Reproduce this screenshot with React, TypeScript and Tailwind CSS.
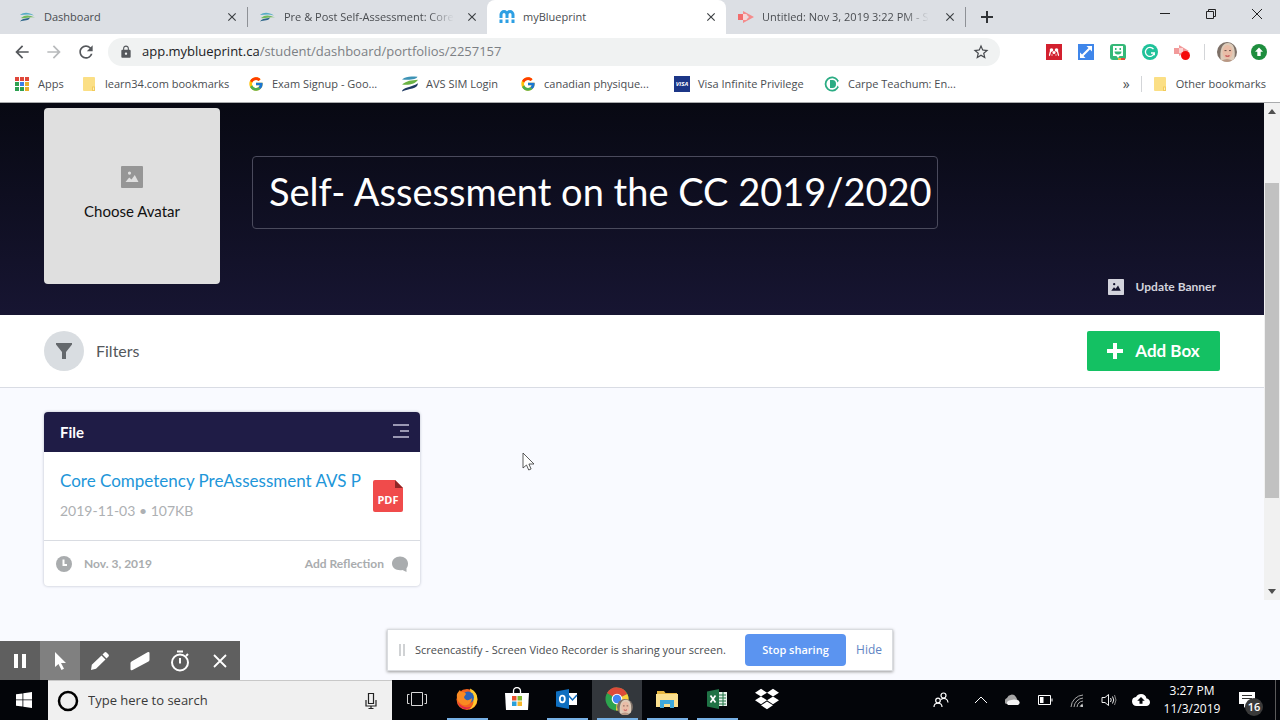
import React, { useState } from "react";
import { FcGoogle } from "react-icons/fc";
import { FaDropbox } from "react-icons/fa";
import {
  MdArrowBack,
  MdArrowForward,
  MdClose,
  MdCloudUpload,
  MdLock,
  MdOutlineStarBorder,
  MdRefresh,
} from "react-icons/md";

interface Tab {
  id: string;
  title: string;
  icon: React.ReactNode;
  className: string;
}

interface Bookmark {
  title: string;
  icon: React.ReactNode;
  className: string;
}

const WaveIcon = ({ className }: { className: string }) => (
  <svg viewBox="0 0 16 16" className={className}>
    <path d="M0 3.500C4 0 9 .2 15.500 .8 15 3 8 4.500 0 3.500Z" fill="#3d93b5" />
    <path d="M0 8.500C5 4.600 9 4.400 16 3.800 14 7.400 7 9.800 0 8.500Z" fill="#6bb344" />
    <path d="M0 15.500C0 11.600 9 11.600 16 7.200 15.500 13.600 7 12 0 15.500Z" fill="#1f3a63" />
  </svg>
);

const WaveTabIcon = () => (
  <svg viewBox="0 0 16 16" className="size-4">
    <path d="M0 6C4 2.800 9 3.400 14 6.400 9 5 5 5.800 0 6Z" fill="#56acc4" />
    <path d="M1 9C5 5.600 9 5.800 15 8.600 9 7.400 6 9.800 1 9Z" fill="#72bb5c" />
    <path d="M0 12.400C3 9.200 6 10 10 8.600 9 12 4 11.400 0 12.400Z" fill="#2b6488" />
  </svg>
);

const MyBlueprintIcon = () => (
  <svg viewBox="0 0 16 16" className="size-4">
    <path
      d="M2 9V5.600a3 3 0 0 1 6 0V9M8 5.600a3 3 0 0 1 6 0V9"
      fill="none"
      stroke="#2d9fe3"
      strokeWidth="3"
    />
    <path d="M.5 10.500h3V14h-3zM6.500 10.500h3V14h-3zM12.500 10.500h3V14h-3z" fill="#2d9fe3" />
  </svg>
);

const CastifyIcon = () => (
  <svg viewBox="0 0 16 16" className="size-4">
    <path d="M0 5h5v6H0z" fill="#f26d6d" />
    <path d="M5 2l11 6-11 6v-3h3l3-3-3-3H5z" fill="#f58c8c" />
    <path d="M5 5h3.500v6H5z" fill="#fbd4d4" />
  </svg>
);

const AppsIcon = () => (
  <svg viewBox="0 0 16 16" className="size-4">
    <path d="M1 1h4v4H1zM6 1h4v4H6zM11 1h4v4h-4z" fill="#e0473a" />
    <path d="M1 6h4v4H1z" fill="#2fa152" />
    <path d="M6 6h4v4H6z" fill="#3d7fe8" />
    <path d="M11 6h4v4h-4z" fill="#eab02e" />
    <path d="M1 11h4v4H1zM6 11h4v4H6z" fill="#2fa152" />
    <path d="M11 11h4v4h-4z" fill="#eab02e" />
    <path d="M5.500 1v14M10.500 1v14M1 5.500h14M1 10.500h14" stroke="#fff" />
  </svg>
);

const FolderIcon = () => (
  <svg viewBox="0 0 16 16" className="size-4">
    <path d="M2 1.500A1 1 0 0 1 3 1h10a1 1 0 0 1 1 1v13H3a1 1 0 0 1-1-1z" fill="#fbdf85" />
    <path d="M11 10.500h3V15h-3z" fill="#f2cb5c" />
    <path d="M12 11.500h1V14h-1z" fill="#fdeeb8" />
  </svg>
);

const VisaIcon = () => (
  <span className="flex size-4 items-center justify-center bg-[#1c3687] text-[6px] font-bold italic text-white">
    VISA
  </span>
);

const CarpeIcon = () => (
  <svg viewBox="0 0 16 16" className="size-4">
    <path
      d="M13.400 4a6.600 6.600 0 1 0 0 8"
      fill="none"
      stroke="#2bac83"
      strokeWidth="1.800"
    />
    <path d="M6 4h2.500a3.500 4 0 0 1 0 8H6z" fill="#2bac83" />
    <path d="M12.500 3.500l2.500 1-1.500 2zM12.500 12.500l2.500-1-1.500-2z" fill="#2bac83" />
  </svg>
);

const PictureIcon = ({ className }: { className: string }) => (
  <svg viewBox="0 0 22 22" className={className} fill="currentColor">
    <path
      fillRule="evenodd"
      d="M1 0h20a1 1 0 0 1 1 1v20a1 1 0 0 1-1 1H1a1 1 0 0 1-1-1V1a1 1 0 0 1 1-1zM4.500 16h13L13.800 9l-3.300 4.400-2.300-2zM8.500 5.500a1.600 1.600 0 1 0 0 3.200 1.600 1.600 0 0 0 0-3.200z"
    />
  </svg>
);

const Face = ({ className }: { className: string }) => (
  <svg viewBox="0 0 20 20" className={className}>
    <defs>
      <clipPath id="face">
        <circle cx="10" cy="10" r="10" />
      </clipPath>
    </defs>
    <g clipPath="url(#face)">
      <path d="M0 0h20v20H0z" fill="#7d7067" />
      <path d="M4 20C2 8 5 1 11 1s8 6 6 19z" fill="#dccbb9" />
      <ellipse cx="10.500" cy="10" rx="5" ry="7" fill="#e9bda7" />
      <path d="M7.500 8.600h2M12 8.600h2" stroke="#6a5048" />
      <path d="M8.500 13.500q2 1.500 4 0" stroke="#c04b50" fill="none" strokeWidth="1.200" />
      <path d="M3 20q7-6 14 0z" fill="#b99784" />
    </g>
  </svg>
);

const tabs: Tab[] = [
  { id: "dashboard", title: "Dashboard", icon: <WaveTabIcon />, className: "" },
  {
    id: "assessment",
    title: "Pre & Post Self-Assessment: Core",
    icon: <WaveTabIcon />,
    className: "mask-r-from-85%",
  },
  { id: "myblueprint", title: "myBlueprint", icon: <MyBlueprintIcon />, className: "" },
  {
    id: "untitled",
    title: "Untitled: Nov 3, 2019 3:22 PM - S",
    icon: <CastifyIcon />,
    className: "mask-r-from-85%",
  },
];

const bookmarks: Bookmark[] = [
  { title: "Apps", icon: <AppsIcon />, className: "w-[67px]" },
  { title: "learn34.com bookmarks", icon: <FolderIcon />, className: "w-[167px]" },
  { title: "Exam Signup - Goo...", icon: <FcGoogle size={16} />, className: "w-[154px]" },
  { title: "AVS SIM Login", icon: <WaveIcon className="size-4" />, className: "w-[118px]" },
  { title: "canadian physique...", icon: <FcGoogle size={16} />, className: "w-[154px]" },
  { title: "Visa Infinite Privilege", icon: <VisaIcon />, className: "w-[150px]" },
  { title: "Carpe Teachum: En...", icon: <CarpeIcon />, className: "w-[150px]" },
];

const extensions = [
  {
    name: "Mendeley",
    icon: (
      <svg viewBox="0 0 16 16" className="size-4">
        <path d="M0 0h16v16H0z" fill="#d3202e" />
        <circle cx="5.500" cy="6" r="1.800" fill="#fff" />
        <circle cx="10.500" cy="6" r="1.800" fill="#fff" />
        <circle cx="8" cy="8.500" r="1.500" fill="#fff" />
        <path
          d="M3 11.500c1.300-.3.500-3 2-5M13 11.500c-1.300-.3-.5-3-2-5M6 10.500v1M10 10.500v1"
          fill="none"
          stroke="#fff"
          strokeWidth="1.300"
        />
      </svg>
    ),
  },
  {
    name: "Resize",
    icon: (
      <svg viewBox="0 0 16 16" className="size-4">
        <path d="M0 0h16v16H0z" fill="#3f86ea" />
        <path d="M8.500 2H14v5.500l-2-2L5.500 12l2 2H2V8.500l2 2L10.500 4z" fill="#fff" />
      </svg>
    ),
  },
  {
    name: "Bitmoji",
    icon: (
      <svg viewBox="0 0 16 16" className="size-4">
        <rect width="16" height="16" rx="3" fill="#35b878" />
        <path d="M3 2h10v10H9.500L8 14l-1.500-2H3z" fill="#fff" />
        <path d="M5 4h1.500v2H5zM9.500 4H11v2H9.500zM4.500 7.500h7a3.500 3 0 0 1-7 0z" fill="#35b878" />
        <path d="M8 14h3v2H8z" fill="#f3b13a" />
        <path d="M11 14h4v2h-4z" fill="#e2483d" />
      </svg>
    ),
  },
  {
    name: "Grammarly",
    icon: (
      <svg viewBox="0 0 16 16" className="size-4">
        <circle cx="8" cy="8" r="8" fill="#1fc29a" />
        <path
          d="M11.500 5.200A4.500 4.500 0 1 0 12.300 9H9M12.300 8.300v3"
          fill="none"
          stroke="#fff"
          strokeWidth="1.300"
        />
      </svg>
    ),
  },
  {
    name: "Screencastify",
    icon: (
      <svg viewBox="0 0 16 16" className="size-4">
        <path d="M0 4h5v6H0zM5 1l10 6-10 5z" fill="#f29a9a" />
        <path d="M5 4h4v5H5z" fill="#fbd4d4" />
        <circle cx="11.500" cy="11.500" r="4.500" fill="#f40b0b" />
      </svg>
    ),
  },
];

const FirefoxIcon = () => (
  <svg viewBox="0 0 24 24" className="size-6">
    <circle cx="12" cy="12.500" r="10.500" fill="#f4631e" />
    <path d="M15 1.500c5 2 8.500 7 7 13-1 4-4 7-8 8 5-4 6-9 2-14z" fill="#ffcb2f" />
    <circle cx="13" cy="10.500" r="6" fill="#2c63b8" />
    <path d="M2 7c1-2 2-3 3-4l1 2c2 0 4 0 5 2l-2 3c1 4 5 4 8 1 0 6-5 8-9 7-4-2-7-6-6-11z" fill="#f98a22" />
    <path d="M3 15c3 5 9 7 14 4-4 5-12 4-14-4z" fill="#e2264f" />
  </svg>
);

const StoreIcon = () => (
  <svg viewBox="0 0 24 24" className="size-6">
    <path d="M8.500 7V4a3.500 3.500 0 0 1 7 0v3" fill="none" stroke="#fff" strokeWidth="1.300" />
    <path d="M0 6h24l-1 17H1z" fill="#fff" />
    <path d="M7 9h4.500v4.500H7z" fill="#e8502c" />
    <path d="M12.500 9H17v4.500h-4.500z" fill="#7fb82c" />
    <path d="M7 14.500h4.500V19H7z" fill="#2ba0da" />
    <path d="M12.500 14.500H17V19h-4.500z" fill="#f6b62a" />
  </svg>
);

const OutlookIcon = () => (
  <svg viewBox="0 0 24 24" className="size-6">
    <path d="M13 6h9v12h-9z" fill="#fff" />
    <path d="M13 8l4.500 5L22 8" fill="none" stroke="#0f6cbd" strokeWidth="1.500" />
    <path d="M1 4.500L14 2v20L1 19.500z" fill="#0f6fc0" />
    <ellipse cx="7.300" cy="12" rx="2.500" ry="3.300" fill="none" stroke="#fff" strokeWidth="1.800" />
  </svg>
);

const ChromeIcon = () => (
  <span className="relative">
    <svg viewBox="0 0 24 24" className="size-6">
      <circle cx="12" cy="12" r="11.500" fill="#2da44e" />
      <path d="M12 12L2 6a11.500 11.500 0 0 1 20.300 1z" fill="#dd4b39" />
      <path d="M12 12l10.300-5A11.500 11.500 0 0 1 11 23.500z" fill="#fdd03b" />
      <circle cx="12" cy="12" r="5.300" fill="#fff" />
      <circle cx="12" cy="12" r="4.200" fill="#4285f4" />
    </svg>
    <Face className="absolute -right-1 -bottom-1 size-4" />
  </span>
);

const ExplorerIcon = () => (
  <svg viewBox="0 0 24 24" className="size-6">
    <path d="M2 4h7l1.500 2H22v4H2z" fill="#e8b842" />
    <path d="M1 7h22v13H1z" fill="#fbe08f" />
    <path d="M5 21v-8h14v8h-4v-4H9v4z" fill="#3ea9dc" />
  </svg>
);

const ExcelIcon = () => (
  <svg viewBox="0 0 24 24" className="size-6">
    <path d="M13 5h9v14h-9z" fill="#e9f3ec" />
    <path d="M14 8h7M14 11h7M14 14h7M14 17h7M18 5v14" stroke="#1f7245" />
    <path d="M2 4.500L14 2v20L2 19.500z" fill="#1f7245" />
    <path d="M5.500 8.500l5 7M10.500 8.500l-5 7" stroke="#fff" strokeWidth="1.700" />
  </svg>
);

const TaskViewIcon = () => (
  <svg viewBox="0 0 20 16" className="h-4 w-5" fill="none" stroke="#d8d8d8">
    <path d="M4.500 1.500h11v13h-11zM2.500 3.500h-2v9h2M17.500 3.500h2v9h-2" />
  </svg>
);

const taskbarApps = [
  { name: "Task View", icon: <TaskViewIcon />, open: false },
  { name: "Firefox", icon: <FirefoxIcon />, open: true },
  { name: "Microsoft Store", icon: <StoreIcon />, open: false },
  { name: "Outlook", icon: <OutlookIcon />, open: true },
  { name: "Chrome", icon: <ChromeIcon />, open: true },
  { name: "File Explorer", icon: <ExplorerIcon />, open: true },
  { name: "Excel", icon: <ExcelIcon />, open: true },
  { name: "Dropbox", icon: <FaDropbox size={24} color="#fff" />, open: false },
];

const trayIcons = [
  {
    name: "People",
    className: "w-10 pr-2",
    icon: (
      <svg viewBox="0 0 16 16" className="size-4" fill="none" stroke="#fff" strokeWidth="1.200">
        <circle cx="10.500" cy="3.500" r="2.500" />
        <circle cx="5" cy="8.500" r="2.300" />
        <path d="M1 15c0-5 8-5 8 0M8 7.500c3-2.500 7-.5 7 3" />
      </svg>
    ),
  },
  {
    name: "Show hidden icons",
    className: "w-8",
    icon: (
      <svg viewBox="0 0 16 16" className="size-4" fill="none" stroke="#fff">
        <path d="M2 11l6-6 6 6" />
      </svg>
    ),
  },
  {
    name: "OneDrive",
    className: "w-8",
    icon: (
      <svg viewBox="0 0 16 16" className="size-4">
        <path d="M1 12a3.500 3.500 0 0 1 1-6 5 5 0 0 1 9-1l2 4z" fill="#a5a5a5" />
        <path d="M3 13a2.500 2.500 0 0 1 1-4.500l5-1 3 .5a2.600 2.600 0 0 1 1 5z" fill="#f5f5f5" />
      </svg>
    ),
  },
  {
    name: "Battery",
    className: "w-8",
    icon: (
      <svg viewBox="0 0 16 16" className="size-4">
        <path d="M1.500 3.500h12v9h-12zM15 6.500v3" fill="none" stroke="#fff" />
        <path d="M3 5h3.500v6H3z" fill="#fff" />
      </svg>
    ),
  },
  {
    name: "Network",
    className: "w-8",
    icon: (
      <svg viewBox="0 0 16 16" className="size-4" fill="none" stroke="#aaa">
        <path d="M2 15A13 13 0 0 1 14 3M5 15A10 10 0 0 1 14 6M8 15a7 7 0 0 1 6-6M11 15a4 4 0 0 1 3-3" />
        <circle cx="13" cy="14" r="1" fill="#fff" stroke="none" />
      </svg>
    ),
  },
  {
    name: "Volume",
    className: "w-8",
    icon: (
      <svg viewBox="0 0 16 16" className="size-4" fill="none" stroke="#eee">
        <path d="M1 5.500h3l3.500-3v11l-3.500-3H1z" />
        <path d="M9.500 6q1.500 2 0 4M11.500 4.500q2.500 3.500 0 7" />
        <path d="M13.500 3q3 5 0 10" stroke="#888" />
      </svg>
    ),
  },
  {
    name: "Backup",
    className: "w-8",
    icon: <MdCloudUpload size={18} color="#fff" />,
  },
];

const recorderTools = [
  {
    name: "Pause",
    icon: (
      <svg viewBox="0 0 16 16" className="size-4" fill="#fff">
        <path d="M2 1h4v14H2zM10 1h4v14h-4z" />
      </svg>
    ),
  },
  {
    name: "Mouse",
    icon: (
      <svg viewBox="0 0 20 20" className="size-5" fill="#fff">
        <path d="M5 1v15l3.500-3 3 6 2.500-1.200-3-5.800h5z" />
      </svg>
    ),
  },
  {
    name: "Pen",
    icon: (
      <svg viewBox="0 0 20 20" className="size-5" fill="#fff">
        <path d="M1 19l.8-5.200L11.500 4.500l4 4L6 17.800zM12.500 3.500l2-2q1-.9 2 0l2 2q.9 1 0 2l-2 2z" />
      </svg>
    ),
  },
  {
    name: "Eraser",
    icon: (
      <svg viewBox="0 0 20 20" className="size-5" fill="#fff">
        <path d="M1.500 10.500L17.500 1.300q2-1 2 1v6.500q0 1-1 1.600L2.500 19Q.5 20 .5 18v-6q0-1 1-1.500z" />
      </svg>
    ),
  },
  {
    name: "Timer",
    icon: (
      <svg viewBox="0 0 20 22" className="h-[22px] w-5" fill="none" stroke="#fff" strokeWidth="2">
        <circle cx="10" cy="12.500" r="8" />
        <path d="M7 1.500h6M10 8v5.500M16 6l2-2" />
      </svg>
    ),
  },
  {
    name: "Close",
    icon: (
      <svg viewBox="0 0 16 16" className="size-4" fill="none" stroke="#fff" strokeWidth="1.800">
        <path d="M2 2l12 12M14 2L2 14" />
      </svg>
    ),
  },
];

function TabStrip() {
  const [activeTab, setActiveTab] = useState("myblueprint");

  return (
    <div className="flex h-[34px] bg-[#dcdfe4] pl-2">
      {tabs.map((tab) => (
        <React.Fragment key={tab.id}>
          <div
            className={`flex w-[239px] items-center pr-2 pl-3 ${
              tab.id === activeTab ? "rounded-t-lg bg-white" : ""
            }`}
          >
            <button
              onClick={() => setActiveTab(tab.id)}
              className="flex min-w-0 flex-1 items-center gap-2"
            >
              <span className="shrink-0">{tab.icon}</span>
              <span className={`whitespace-nowrap ${tab.className}`}>{tab.title}</span>
            </button>
            <button aria-label={`Close ${tab.title}`} className="shrink-0">
              <MdClose size={14} color="#3c4043" />
            </button>
          </div>
          {(tab.id === "dashboard" || tab.id === "untitled") && (
            <span className="h-5 w-px self-center bg-[#8e9196]" />
          )}
        </React.Fragment>
      ))}
      <button aria-label="New tab" className="ml-[13px]">
        <svg viewBox="0 0 16 16" className="size-4" stroke="#303336" strokeWidth="2">
          <path d="M8 2v12M2 8h12" />
        </svg>
      </button>
      <div className="ml-auto flex h-7 items-center">
        <button aria-label="Minimize" className="flex w-[46px] justify-center">
          <svg viewBox="0 0 12 12" className="size-3" stroke="#222">
            <path d="M1 5.500h10" />
          </svg>
        </button>
        <button aria-label="Restore" className="flex w-[46px] justify-center">
          <svg viewBox="0 0 12 12" className="size-3" fill="none" stroke="#222">
            <path d="M1.500 3.500h7v7h-7zM3.500 3.500v-2h7v7h-2" />
          </svg>
        </button>
        <button aria-label="Close window" className="flex w-[46px] justify-center">
          <svg viewBox="0 0 12 12" className="size-3" stroke="#222">
            <path d="M1 1l10 10M11 1L1 11" />
          </svg>
        </button>
      </div>
    </div>
  );
}

function Toolbar() {
  const [path, setPath] = useState("/student/dashboard/portfolios/2257157");

  return (
    <div className="flex h-9 items-center pr-[13px] pl-3">
      <div className="flex gap-3 pr-3 text-[#55585c]">
        <button aria-label="Back">
          <MdArrowBack size={20} />
        </button>
        <button aria-label="Forward" className="text-[#b8babc]">
          <MdArrowForward size={20} />
        </button>
        <button aria-label="Reload">
          <MdRefresh size={20} />
        </button>
      </div>
      <div className="flex h-7 flex-1 items-center rounded-full bg-[#f0f2f2] pr-[10px] pl-[11px] text-[13px]">
        <MdLock size={14} color="#55585c" />
        <label htmlFor="address" className="ml-[9px] text-[#202124]">
          app.myblueprint.ca
        </label>
        <input
          id="address"
          value={path}
          onChange={(e) => setPath(e.target.value)}
          className="min-w-0 flex-1 bg-transparent text-[#7c8084] outline-none"
        />
        <button aria-label="Bookmark this page">
          <MdOutlineStarBorder size={18} color="#45484c" />
        </button>
      </div>
      <div className="ml-[46px] flex items-center gap-4">
        {extensions.map((item) => (
          <button key={item.name} aria-label={item.name}>
            {item.icon}
          </button>
        ))}
      </div>
      <span className="ml-[14px] h-4 w-px bg-[#d3d5d8]" />
      <button aria-label="Profile" className="ml-3">
        <Face className="size-5" />
      </button>
      <button aria-label="Update" className="ml-[14px]">
        <svg viewBox="0 0 16 16" className="size-4">
          <circle cx="8" cy="8" r="8" fill="#1e8e3e" />
          <path d="M8 3.500l4 4.300H9.700V12H6.300V7.800H4z" fill="#fff" />
        </svg>
      </button>
    </div>
  );
}

function BookmarksBar() {
  return (
    <div className="flex h-[33px] items-center border-b border-[#a9abad] pr-[14px] pb-1 pl-[14px] whitespace-nowrap">
      {bookmarks.map((item) => (
        <a key={item.title} href="#" className={`flex items-center gap-2 ${item.className}`}>
          <span className="shrink-0">{item.icon}</span>
          {item.title}
        </a>
      ))}
      <button className="ml-auto text-sm">»</button>
      <span className="mr-[10px] ml-[11px] h-4 w-px bg-[#d3d5d8]" />
      <a href="#" className="flex items-center gap-2">
        <FolderIcon />
        Other bookmarks
      </a>
    </div>
  );
}

function Banner() {
  const [title, setTitle] = useState("Self- Assessment on the CC 2019/2020");

  return (
    <header className="flex h-[212px] items-start bg-linear-to-b from-[#080913] to-[#171532] px-11 pt-[5px]">
      <button className="flex size-44 shrink-0 flex-col items-center justify-center gap-3 rounded bg-[#dfdfdf] pb-1 text-[15px] text-[#111]">
        <PictureIcon className="size-[22px] text-[#969696]" />
        Choose Avatar
      </button>
      <input
        aria-label="Portfolio title"
        value={title}
        onChange={(e) => setTitle(e.target.value)}
        className="mt-12 ml-8 h-[73px] w-[686px] min-w-0 rounded border border-[#4a4a5c] bg-transparent pr-1 pb-1 pl-4 text-[38px] text-white outline-none"
      />
      <button className="mr-1 mb-5 ml-auto flex items-center gap-3 self-end text-xs font-bold whitespace-nowrap text-[#d3d3dc]">
        <PictureIcon className="size-4" />
        Update Banner
      </button>
    </header>
  );
}

function FileCard() {
  return (
    <article className="w-[376px] overflow-hidden rounded bg-white shadow-[0_0_3px_#b8bcc8]">
      <div className="flex h-10 items-center justify-between bg-[#1f1c46] pr-[10px] pl-4">
        <h2 className="text-[15px] font-bold text-white">File</h2>
        <button aria-label="Box menu">
          <svg viewBox="0 0 18 16" className="h-4 w-[18px]" stroke="#9a98b3" strokeWidth="2">
            <path d="M1 1h16M8 7h9M1 13h16" />
          </svg>
        </button>
      </div>
      <div className="flex h-[89px] items-center justify-between border-b border-[#d9dce2] pr-[17px] pl-4">
        <div className="leading-6 whitespace-nowrap">
          <a href="#" className="text-[17px] text-[#2196d9]">
            Core Competency PreAssessment AVS P
          </a>
          <p className="mt-1 text-sm leading-6 text-[#adb0b3]">2019-11-03 • 107KB</p>
        </div>
        <svg viewBox="0 0 30 32" className="h-8 w-[30px] shrink-0">
          <path d="M2 0h20l8 8v22a2 2 0 0 1-2 2H2a2 2 0 0 1-2-2V2a2 2 0 0 1 2-2z" fill="#f04b4b" />
          <path d="M22 0l8 8h-8z" fill="#8e2626" />
          <text
            x="15"
            y="24"
            textAnchor="middle"
            className="fill-white font-['Open_Sans',sans-serif] text-[11px] font-bold"
          >
            PDF
          </text>
        </svg>
      </div>
      <div className="flex h-[45px] items-center pr-3 pl-3 text-xs font-bold text-[#a9acae]">
        <svg viewBox="0 0 16 16" className="mr-3 size-4">
          <circle cx="8" cy="8" r="8" fill="#a9acae" />
          <path d="M7.500 3.500V9H11" fill="none" stroke="#fff" strokeWidth="2" />
        </svg>
        Nov. 3, 2019
        <button className="ml-auto flex items-center gap-2">
          Add Reflection
          <svg viewBox="0 0 16 16" className="size-4" fill="#a9acae">
            <path d="M8 .5c4.500 0 8 3 8 7 0 2-.5 3.500-1.500 4.700V16l-4-2C5 15 0 12.500 0 7.500c0-4 3.500-7 8-7z" />
          </svg>
        </button>
      </div>
    </article>
  );
}

function Scrollbar() {
  return (
    <div className="mb-20 flex w-4 shrink-0 flex-col items-center justify-between bg-[#f1f1f1] py-[6px]">
      <svg viewBox="0 0 8 5" className="h-[5px] w-2">
        <path d="M4 0l4 5H0z" fill="#505050" />
      </svg>
      <div className="mt-[69px] mb-[91px] w-[14px] flex-1 bg-[#c1c1c1]" />
      <svg viewBox="0 0 8 5" className="h-[5px] w-2">
        <path d="M4 5l4-5H0z" fill="#505050" />
      </svg>
    </div>
  );
}

function Recorder() {
  return (
    <div className="absolute bottom-0 left-0 flex h-[39px] bg-[#5f5f5f]">
      {recorderTools.map((tool) => (
        <button
          key={tool.name}
          aria-label={tool.name}
          className={`flex w-10 items-center justify-center ${
            tool.name === "Mouse" ? "bg-[#808080]" : ""
          }`}
        >
          {tool.icon}
        </button>
      ))}
    </div>
  );
}

function SharingBar() {
  return (
    <div className="absolute bottom-[9px] left-1/2 flex h-[42px] w-[506px] -translate-x-1/2 items-center border border-[#dadce0] bg-white pr-[10px] pl-[11px] whitespace-nowrap shadow-[0_1px_3px_#9a9a9a]">
      <span className="h-3 w-[6px] border-x-2 border-[#d0d2d4]" />
      <span className="ml-[10px] text-[#4a4d50]">
        Screencastify - Screen Video Recorder is sharing your screen.
      </span>
      <button className="ml-auto h-8 w-[101px] rounded bg-[#5b94f0] font-semibold text-white">
        Stop sharing
      </button>
      <button className="ml-[10px] text-xs text-[#5f85c4]">Hide</button>
    </div>
  );
}

function Taskbar() {
  return (
    <footer className="flex h-10 bg-[#030509] text-white">
      <button aria-label="Start" className="flex w-12 items-center justify-center">
        <svg viewBox="0 0 16 16" className="size-4" fill="#fff">
          <path d="M0 2.300L6.500 1.400v6.100H0zM7.300 1.300L16 0v7.500H7.300zM0 8.300h6.500v6.200L0 13.700zM7.300 8.300H16V16l-8.700-1.300z" />
        </svg>
      </button>
      <div className="flex w-[344px] items-center border-t border-[#c8c8c8] bg-[#f0f0f0] pr-3 pl-[9px]">
        <svg viewBox="0 0 22 22" className="size-[22px]">
          <circle cx="11" cy="11" r="9" fill="none" stroke="#000" strokeWidth="2.500" />
        </svg>
        <input
          aria-label="Search"
          placeholder="Type here to search"
          className="ml-[9px] min-w-0 flex-1 bg-transparent text-[13px] outline-none placeholder:text-[#3a3a3a]"
        />
        <button aria-label="Voice search">
          <svg viewBox="0 0 18 18" className="size-[18px]" fill="none" stroke="#222" strokeWidth="1.200">
            <path d="M6.500 1.500h5v10h-5zM4 8v6h10V8M9 14v2.500M6.500 16.500h5" />
          </svg>
        </button>
      </div>
      {taskbarApps.map((app) => (
        <button
          key={app.name}
          aria-label={app.name}
          className={`flex w-[50px] flex-col items-center ${
            app.name === "Chrome" ? "bg-[#33373c]" : ""
          }`}
        >
          <span className="flex flex-1 items-center">{app.icon}</span>
          <span className={`h-[2px] w-[41px] ${app.open ? "bg-[#76b0e4]" : ""}`} />
        </button>
      ))}
      <div className="ml-auto flex items-center">
        {trayIcons.map((item) => (
          <button
            key={item.name}
            aria-label={item.name}
            className={`flex justify-center ${item.className}`}
          >
            {item.icon}
          </button>
        ))}
        <button className="w-[70px] text-center text-xs leading-[18px]">
          3:27 PM
          <br />
          11/3/2019
        </button>
        <button
          aria-label="Notifications"
          className="relative mr-[6px] ml-[6px] flex w-9 items-start self-stretch pt-[11px] pl-[6px]"
        >
          <svg viewBox="0 0 18 18" className="size-[18px]">
            <path d="M0 1h16v12H8l-3 4v-4H0z" fill="#fff" />
            <path d="M3 4.500h10M3 7.500h10" stroke="#333" />
          </svg>
          <span className="absolute right-[6px] bottom-1 flex size-[18px] items-center justify-center rounded-full bg-[#3a3a3a] font-semibold">
            16
          </span>
        </button>
        <span className="mr-1 h-10 w-px bg-[#5a5a5a]" />
      </div>
    </footer>
  );
}

function App() {
  return (
    <div className="flex min-h-screen flex-col overflow-hidden bg-white font-['Open_Sans',sans-serif] text-[11px] text-[#4a4d51]">
      <TabStrip />
      <Toolbar />
      <BookmarksBar />
      <div className="relative flex flex-1 bg-[#f9faff]">
        <main className="min-w-0 flex-1 font-[Lato,sans-serif]">
          <Banner />
          <div className="flex h-[73px] items-center justify-between border-b border-[#d9dce4] bg-white pr-11 pl-11">
            <button className="flex items-center gap-3 text-base text-[#54585c]">
              <span className="flex size-10 items-center justify-center rounded-full bg-[#d9dde1]">
                <svg viewBox="0 0 16 16" className="size-4" fill="#64686c">
                  <path d="M0 0h16v1.500L10 9v7H6V9L0 1.500z" />
                </svg>
              </span>
              Filters
            </button>
            <button className="flex h-10 w-[133px] items-center justify-center gap-3 rounded-xs bg-[#14c163] text-[17px] font-bold text-white">
              <svg viewBox="0 0 16 16" className="size-4" fill="#fff">
                <path d="M6 0h4v6h6v4h-6v6H6v-6H0V6h6z" />
              </svg>
              Add Box
            </button>
          </div>
          <div className="px-11 pt-6">
            <FileCard />
          </div>
        </main>
        <Scrollbar />
        <svg viewBox="0 0 14 20" className="absolute top-[349px] left-[522px] h-5 w-[14px]">
          <path
            d="M1 1v15l3.500-3 2.200 5 2.400-1-2.200-5H12z"
            fill="#fff"
            stroke="#333"
            strokeWidth=".8"
          />
        </svg>
        <Recorder />
        <SharingBar />
      </div>
      <Taskbar />
    </div>
  );
}

export default App;
